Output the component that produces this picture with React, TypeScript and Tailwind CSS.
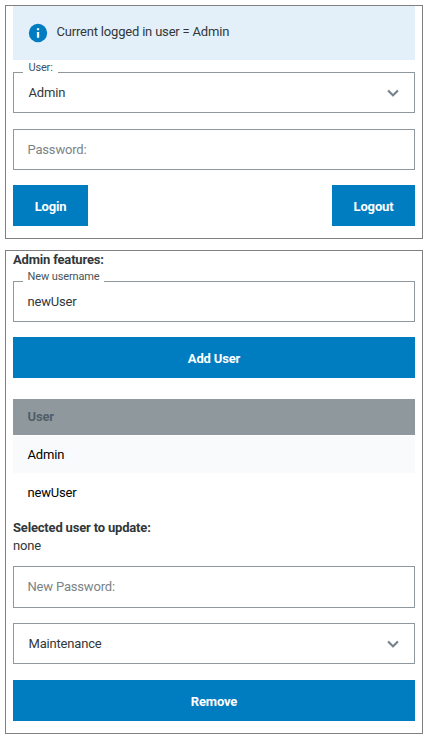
import type { ReactNode } from "react";

function Chevron() {
  return (
    <svg viewBox="0 0 24 24" className="mr-[10px] h-[22px] w-[22px] shrink-0 fill-[#74838b] stroke-[#74838b] [stroke-width:0.25]">
      <path d="M7.41 8.58 12 13.17l4.59-4.59L18 10l-6 6-6-6z" />
    </svg>
  );
}

function InfoIcon() {
  return (
    <svg viewBox="0 0 24 24" className="h-[22px] w-[22px] shrink-0">
      <circle cx="12" cy="12" r="10" className="fill-[#007cc1]" />
      <path d="M10.8 6.7h2.5v2.4h-2.5zM10.8 10.8h2.5v6.3h-2.5z" className="fill-white" />
    </svg>
  );
}

function Panel({ className, children }: { className: string; children: ReactNode }) {
  return <section className={`flex flex-col border border-[#808080] px-[7px] ${className}`}>{children}</section>;
}

function Field({
  label,
  labelClass = "",
  className = "",
  children,
}: {
  label?: string;
  labelClass?: string;
  className?: string;
  children: ReactNode;
}) {
  return (
    <div className={`relative flex shrink-0 items-center justify-between border border-[#8e989d] ${className}`}>
      {label && (
        <span className={`absolute left-[9px] h-4 bg-white text-[11px] leading-4 ${labelClass}`}>{label}</span>
      )}
      {children}
    </div>
  );
}

function Button({ className, children }: { className: string; children: ReactNode }) {
  return (
    <button className={`h-[41px] shrink-0 bg-[#007cc1] pt-[2px] text-[13px] font-bold tracking-[-0.17px] text-white ${className}`}>
      {children}
    </button>
  );
}

export default function App() {
  return (
    <main className="flex h-[740px] w-[429px] flex-col bg-white pl-[5px] pr-[6px] pt-[5px] font-['Roboto',sans-serif] text-[13px] leading-[18px] tracking-[-0.18px] text-[#32373a]">
      <Panel className="h-[234px]">
        <div className="flex h-[54px] items-center bg-[#e3f0f9] pl-[14px]">
          <InfoIcon />
          <span className="-mt-[2px] ml-[7.5px] tracking-[-0.19px]">Current logged in user = Admin</span>
        </div>
        <Field label="User:" labelClass="-top-[13px] w-[35px] pl-[5.5px] text-[#3b5368]" className="mt-3 h-[41px]">
          <span className="pl-[14.5px]">Admin</span>
          <Chevron />
        </Field>
        <Field className="mt-4 h-[41px]">
          <span className="pl-[13.5px] text-[#7c8385]">Password:</span>
        </Field>
        <div className="mt-[15px] flex justify-between">
          <Button className="w-[75px]">Login</Button>
          <Button className="w-[83px]">Logout</Button>
        </div>
      </Panel>

      <Panel className="mt-[11px] h-[484px]">
        <h2 className="h-[30px] font-bold">Admin features:</h2>
        <Field label="New username" labelClass="-top-[13px] w-[81px] pl-[4.5px] tracking-[-0.12px] text-[#4a5357]" className="h-[41px]">
          <span className="pl-[13.5px]">newUser</span>
        </Field>
        <Button className="mt-[15px]">Add User</Button>

        <div className="mt-[21px] flex flex-col gap-px text-black">
          <div className="flex h-9 items-center bg-[#8f989d] pl-[14.5px] font-bold text-[#505f69]">User</div>
          <div className="flex h-[37px] items-center bg-[#f9fafc] pl-[14.5px]">Admin</div>
          <div className="flex h-[37px] items-center pl-[14.5px]">newUser</div>
        </div>

        <h3 className="mt-[8px] font-bold">Selected user to update:</h3>
        <p>none</p>
        <Field className="mt-[11px] h-[42px]">
          <span className="pl-[13.5px] text-[#7c8385]">New Password:</span>
        </Field>
        <Field className="mt-[15px] h-[41px]">
          <span className="pl-[14.5px]">Maintenance</span>
          <Chevron />
        </Field>
        <Button className="mt-4">Remove</Button>
      </Panel>
    </main>
  );
}
